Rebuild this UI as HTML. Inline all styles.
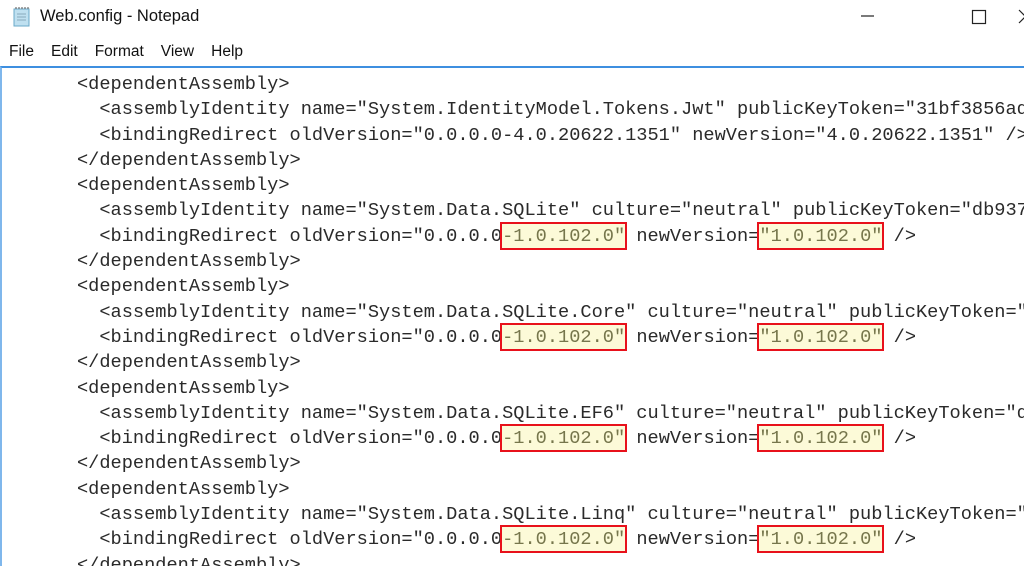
<!DOCTYPE html>
<html><head><meta charset="utf-8"><style>
html,body{margin:0;padding:0;width:1024px;height:562px;overflow:hidden;background:#fff;font-family:"Liberation Sans",sans-serif}
.title{position:absolute;left:40px;top:7px;font-size:16.5px;color:#111}
.menu{position:absolute;top:43px;left:9px;font-size:15.5px;color:#111}
.menu span{margin-right:17px}
.edit{position:absolute;left:0;top:66px;width:1024px;height:500px;border-top:2px solid #3d8fe0;border-left:2px solid #7fb7ec;box-sizing:border-box;overflow:hidden}
pre{position:absolute;left:75px;top:4px;margin:0;font-family:"Liberation Mono",monospace;font-size:18.65px;line-height:25.3px;color:#2a2a2a;white-space:pre}
.h{display:inline-block;height:24px;line-height:25px;vertical-align:top;background:#fcfad8;color:#76764c;outline:2px solid #e8111b;outline-offset:0}
</style></head><body>
<svg style="position:absolute;left:11px;top:6px" width="22" height="22" viewBox="0 0 22 22">
<rect x="3" y="3" width="15" height="17" fill="#bfe0f0" stroke="#6aa9c8"/>
<path d="M5 3 V1 M8 3 V1 M11 3 V1 M14 3 V1 M17 3 V1" stroke="#555" stroke-width="1"/>
<path d="M6 8 H15 M6 11 H15 M6 14 H15" stroke="#8ab" stroke-width="1"/>
</svg>
<div class="title">Web.config - Notepad</div>
<svg style="position:absolute;left:860px;top:8px" width="164" height="20">
<path d="M1 8 H14" stroke="#222" stroke-width="1.2"/>
<rect x="112.5" y="2.5" width="13" height="13" fill="none" stroke="#222" stroke-width="1.2"/>
<path d="M159 2 L172 15 M172 2 L159 15" stroke="#222" stroke-width="1.2"/>
</svg>
<div class="menu"><span>File</span><span>Edit</span><span>Format</span><span>View</span><span>Help</span></div>
<div class="edit"><pre>&lt;dependentAssembly&gt;
  &lt;assemblyIdentity name="System.IdentityModel.Tokens.Jwt" publicKeyToken="31bf3856ad364e35" culture="neutral" /&gt;
  &lt;bindingRedirect oldVersion="0.0.0.0-4.0.20622.1351" newVersion="4.0.20622.1351" /&gt;
&lt;/dependentAssembly&gt;
&lt;dependentAssembly&gt;
  &lt;assemblyIdentity name="System.Data.SQLite" culture="neutral" publicKeyToken="db937bc2d44ff139" /&gt;
  &lt;bindingRedirect oldVersion="0.0.0.0<span class="h">-1.0.102.0"</span> newVersion=<span class="h">"1.0.102.0"</span> /&gt;
&lt;/dependentAssembly&gt;
&lt;dependentAssembly&gt;
  &lt;assemblyIdentity name="System.Data.SQLite.Core" culture="neutral" publicKeyToken="db937bc2d44ff139" /&gt;
  &lt;bindingRedirect oldVersion="0.0.0.0<span class="h">-1.0.102.0"</span> newVersion=<span class="h">"1.0.102.0"</span> /&gt;
&lt;/dependentAssembly&gt;
&lt;dependentAssembly&gt;
  &lt;assemblyIdentity name="System.Data.SQLite.EF6" culture="neutral" publicKeyToken="db937bc2d44ff139" /&gt;
  &lt;bindingRedirect oldVersion="0.0.0.0<span class="h">-1.0.102.0"</span> newVersion=<span class="h">"1.0.102.0"</span> /&gt;
&lt;/dependentAssembly&gt;
&lt;dependentAssembly&gt;
  &lt;assemblyIdentity name="System.Data.SQLite.Linq" culture="neutral" publicKeyToken="db937bc2d44ff139" /&gt;
  &lt;bindingRedirect oldVersion="0.0.0.0<span class="h">-1.0.102.0"</span> newVersion=<span class="h">"1.0.102.0"</span> /&gt;
&lt;/dependentAssembly&gt;</pre></div>
</body></html>
